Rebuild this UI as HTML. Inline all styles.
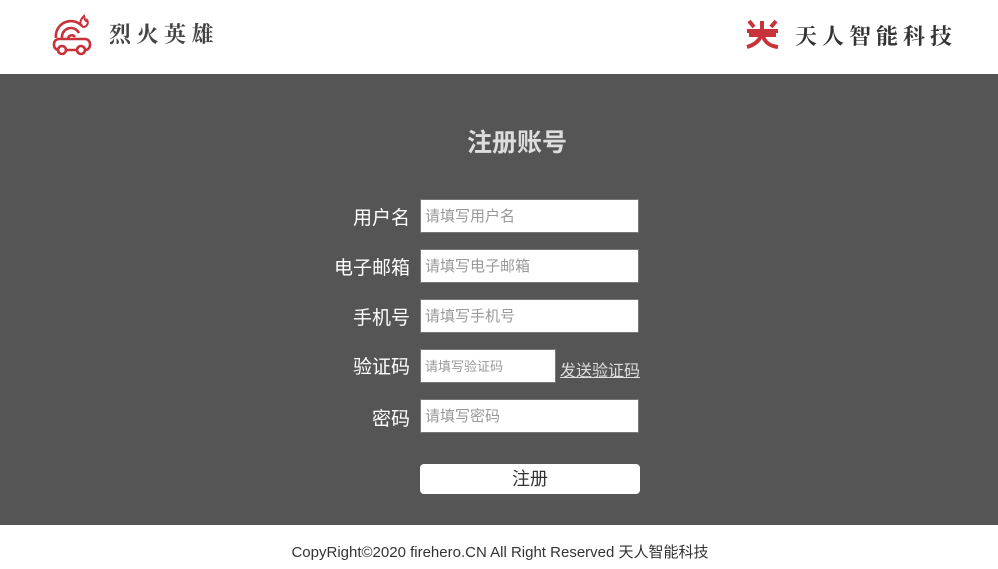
<!DOCTYPE html>
<html><head><meta charset="utf-8"><style>
*{margin:0;padding:0;box-sizing:border-box}
body{width:998px;height:569px;position:relative;background:#fff;font-family:"Liberation Sans","Noto Sans CJK SC",sans-serif;overflow:hidden}
.a{position:absolute}
.main{left:0;top:74px;width:998px;height:451px;background:#555555}
.lbl{color:#fff;font-size:19px;right:588px;text-align:right;white-space:nowrap;line-height:24px}
.in{left:420px;width:219px;height:34px;background:#fff;border:1px solid #777;color:#999;font-size:15px;line-height:34px;padding-left:4px}
.logo{font-family:"Noto Serif CJK SC","Noto Sans CJK SC",serif;color:#444;font-size:22px;letter-spacing:5.5px;font-weight:bold}
</style></head><body>
<svg class="a" style="left:52px;top:12px" width="42" height="45" viewBox="0 0 42 45" fill="none" stroke="#c8323a" stroke-width="2.6">
<path d="M4 26 A15 15 0 0 1 30 14"/><path d="M10 26 A9 9 0 0 1 27 21"/><path d="M16 26 A4 4 0 0 1 23 25"/>
<path d="M32 4 C28 8 27 12 31 15 C35 15 37 11 35 8 C34 10 33 9 32 4Z" stroke-width="2"/>
<rect x="2" y="27" width="36" height="11" rx="5"/><circle cx="10" cy="38" r="4" fill="#fff"/><circle cx="29" cy="38" r="4" fill="#fff"/></svg>
<div class="a logo" style="left:109px;top:18px">烈火英雄</div>
<svg class="a" style="left:746px;top:19px" width="33" height="30" viewBox="0 0 33 30">
<path d="M3 2 L8 8 M30 2 L25 8 M1 12 H32 M16 2 V14 M3 16 H30 M16 14 C14 22 8 26 1 28 M17 16 C18 23 24 27 32 28" stroke="#c8323a" stroke-width="4" fill="none"/></svg>
<div class="a logo" style="left:795px;top:20px;color:#333;letter-spacing:5px">天人智能科技</div>
<div class="a main"></div>
<div class="a" style="left:0;width:1034px;top:123px;text-align:center;color:#ddd;font-size:25px;font-weight:bold">注册账号</div>
<div class="a lbl" style="top:207px">用户名</div><div class="a in" style="top:199px">请填写用户名</div>
<div class="a lbl" style="top:257px">电子邮箱</div><div class="a in" style="top:249px">请填写电子邮箱</div>
<div class="a lbl" style="top:307px">手机号</div><div class="a in" style="top:299px">请填写手机号</div>
<div class="a lbl" style="top:356px">验证码</div><div class="a in" style="top:349px;width:136px;font-size:13px">请填写验证码</div>
<div class="a" style="left:560px;top:357px;color:#ddd;font-size:16px;text-decoration:underline">发送验证码</div>
<div class="a lbl" style="top:408px">密码</div><div class="a in" style="top:399px">请填写密码</div>
<div class="a" style="left:420px;top:464px;width:220px;height:30px;background:#fff;border-radius:4px;text-align:center;font-size:18px;line-height:30px;color:#333">注册</div>
<div class="a" style="left:0;width:1000px;top:541px;text-align:center;font-size:15px;color:#333">CopyRight©2020 firehero.CN All Right Reserved 天人智能科技</div>
</body></html>
